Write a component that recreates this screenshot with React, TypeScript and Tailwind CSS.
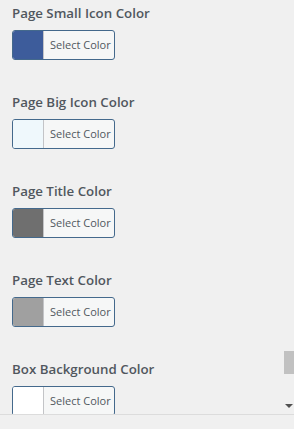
import React from "react";

const fields = [
  { label: "Page Small Icon Color", color: "bg-[#3d5c9b]" },
  { label: "Page Big Icon Color", color: "bg-[#eff8fc]" },
  { label: "Page Title Color", color: "bg-[#6f6f6f]" },
  { label: "Page Text Color", color: "bg-[#a0a0a0]" },
  { label: "Box Background Color", color: "bg-[#ffffff]" },
];

function ColorField({ label, color }: { label: string; color: string }) {
  return (
    <div className="flex h-[89px] shrink-0 flex-col">
      <h3 className="whitespace-nowrap text-[13.3px] font-semibold leading-[20px] text-[#50575e]">{label}</h3>
      <button className="mt-[7px] flex h-[30px] w-[103px] overflow-hidden rounded-[3px] border border-[#44698c] bg-[#f6f7f7] text-left">
        <span className={`h-full w-[31px] border-r border-[#c3c4c7] ${color}`} />
        <span className="flex-1 pl-[6px] text-[11px] leading-[28px] text-[#50575e]">Select Color</span>
      </button>
    </div>
  );
}

export default function App() {
  return (
    <div className="flex h-[429px] w-[294px] flex-col bg-[#f0f0f0] font-['Open_Sans','Noto_Sans',sans-serif]">
      <div className="flex h-[415px] border-b border-[#dcdcdc]">
        <div className="flex flex-1 flex-col overflow-hidden">
          <div className="h-px w-[281px] bg-[#dedede]" />
          <div className="flex flex-col pl-[12px] pt-[3px]">
            {fields.map((f) => (
              <ColorField key={f.label} {...f} />
            ))}
          </div>
        </div>
        <div className="flex w-[11px] flex-col items-center">
          <div className="mt-[351px] h-[23px] w-[10px] bg-[#c1c1c1]" />
          <div className="mt-[30px] h-0 w-0 border-x-[4px] border-t-[4px] border-x-transparent border-t-[#505050]" />
        </div>
      </div>
    </div>
  );
}
